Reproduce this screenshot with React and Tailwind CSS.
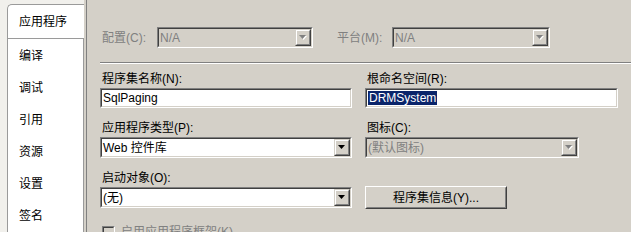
import React from "react";

const Sunken = ({ className, inner, children }) => (
  <div
    className={`border border-t-[#808080] border-l-[#808080] border-b-white border-r-white ${className}`}
  >
    <div
      className={`h-full border border-t-[#404040] border-l-[#404040] border-b-[#d4d0c8] border-r-[#d4d0c8] ${inner}`}
    >
      {children}
    </div>
  </div>
);

const Arrow = ({ disabled }) => (
  <svg width="8" height="5" viewBox="0 0 8 5">
    {disabled && <polygon points="1,1 8,1 4.5,5" fill="#ffffff" />}
    <polygon points="0,0 7,0 3.5,4" fill={disabled ? "#808080" : "#000000"} />
  </svg>
);

const DropBtn = ({ disabled }) => (
  <div className="w-[16px] h-full shrink-0 border border-t-[#d4d0c8] border-l-[#d4d0c8] border-b-[#404040] border-r-[#404040]">
    <div className="h-full border border-t-white border-l-white border-b-[#808080] border-r-[#808080] bg-[#d4d0c8] flex items-center justify-center">
      <Arrow disabled={disabled} />
    </div>
  </div>
);

const Combo = ({ width, text, disabled }) => (
  <Sunken
    className={`${width} h-[21px]`}
    inner={`flex items-stretch ${disabled ? "bg-[#d4d0c8] text-[#808080]" : "bg-white text-black"}`}
  >
    <span className="flex-1 pl-[1px] flex items-center whitespace-nowrap overflow-hidden">{text}</span>
    <DropBtn disabled={disabled} />
  </Sunken>
);

const tabs = ["编译", "调试", "引用", "资源", "设置", "签名"];

export default function App() {
  return (
    <div className="w-[631px] h-[232px] overflow-hidden flex bg-[#d4d0c8] text-[12px] leading-[14px] text-black font-['Liberation_Sans','Noto_Sans_CJK_SC',sans-serif]">
      {/* sidebar */}
      <div className="w-[86px] shrink-0 flex">
        <div className="w-[84px] flex flex-col bg-[#f1f0ec] pl-[7px] pt-[4px]">
          <div className="h-[34px] bg-white border-t border-l border-[#9a9a9a] rounded-tl-[5px] flex items-center pl-[11px]">
            应用程序
          </div>
          <div className="flex-1 bg-white border-t border-l border-r border-[#9a9a9a] pt-[1px]">
            {tabs.map((t) => (
              <div key={t} className="h-[32px] flex items-center pl-[11px]">
                {t}
              </div>
            ))}
          </div>
        </div>
        <div className="w-[2px] bg-[#d4d0c8]" />
      </div>

      {/* panel */}
      <div className="flex-1 border-l border-[#808080] pl-[13px] flex flex-col">
        {/* row 1 */}
        <div className="flex items-center mt-[27px] h-[21px]">
          <span className="w-[57px] pl-[2px] text-[#808080] whitespace-nowrap">配置(C):</span>
          <Combo width="w-[156px]" text="N/A" disabled />
          <span className="w-[57px] ml-[22px] pl-[2px] text-[#808080] whitespace-nowrap">平台(M):</span>
          <Combo width="w-[158px]" text="N/A" disabled />
        </div>
        <div className="mt-[14px] border-t border-[#808080] border-b border-b-white" />

        <div className="grid grid-cols-[252px_253px] gap-x-[13px] mt-[8px]">
          <div className="flex flex-col">
            <span className="pl-[2px] h-[14px]">程序集名称(N):</span>
            <Sunken className="w-[252px] h-[20px] mt-[2px]" inner="bg-white flex items-center pl-[1px]">
              SqlPaging
            </Sunken>
            <span className="pl-[2px] h-[14px] mt-[13px]">应用程序类型(P):</span>
            <div className="mt-[2px]">
              <Combo width="w-[252px]" text="Web 控件库" />
            </div>
            <span className="pl-[2px] h-[14px] mt-[13px]">启动对象(O):</span>
            <div className="mt-[2px]">
              <Combo width="w-[252px]" text="(无)" />
            </div>
          </div>
          <div className="flex flex-col">
            <span className="pl-[2px] h-[14px]">根命名空间(R):</span>
            <Sunken className="w-[253px] h-[20px] mt-[2px]" inner="bg-white flex items-center pl-[1px]">
              <span className="bg-[#0a246a] text-white px-[1px]">DRMSystem</span>
            </Sunken>
            <span className="pl-[2px] h-[14px] mt-[13px]">图标(C):</span>
            <div className="mt-[2px]">
              <Combo width="w-[214px]" text="(默认图标)" disabled />
            </div>
            <div className="h-[14px] mt-[13px]" />
            <div className="mt-[1px] w-[142px] h-[23px] border border-t-white border-l-white border-b-[#404040] border-r-[#404040]">
              <div className="h-full border border-t-[#d4d0c8] border-l-[#d4d0c8] border-b-[#808080] border-r-[#808080] flex items-center justify-center">
                程序集信息(Y)...
              </div>
            </div>
          </div>
        </div>

        <div className="flex items-center mt-[16px] pl-[2px] gap-[6px]">
          <Sunken className="w-[13px] h-[13px]" inner="bg-[#d4d0c8]" />
          <span className="text-[#808080]">启用应用程序框架(K)</span>
        </div>
      </div>
    </div>
  );
}
